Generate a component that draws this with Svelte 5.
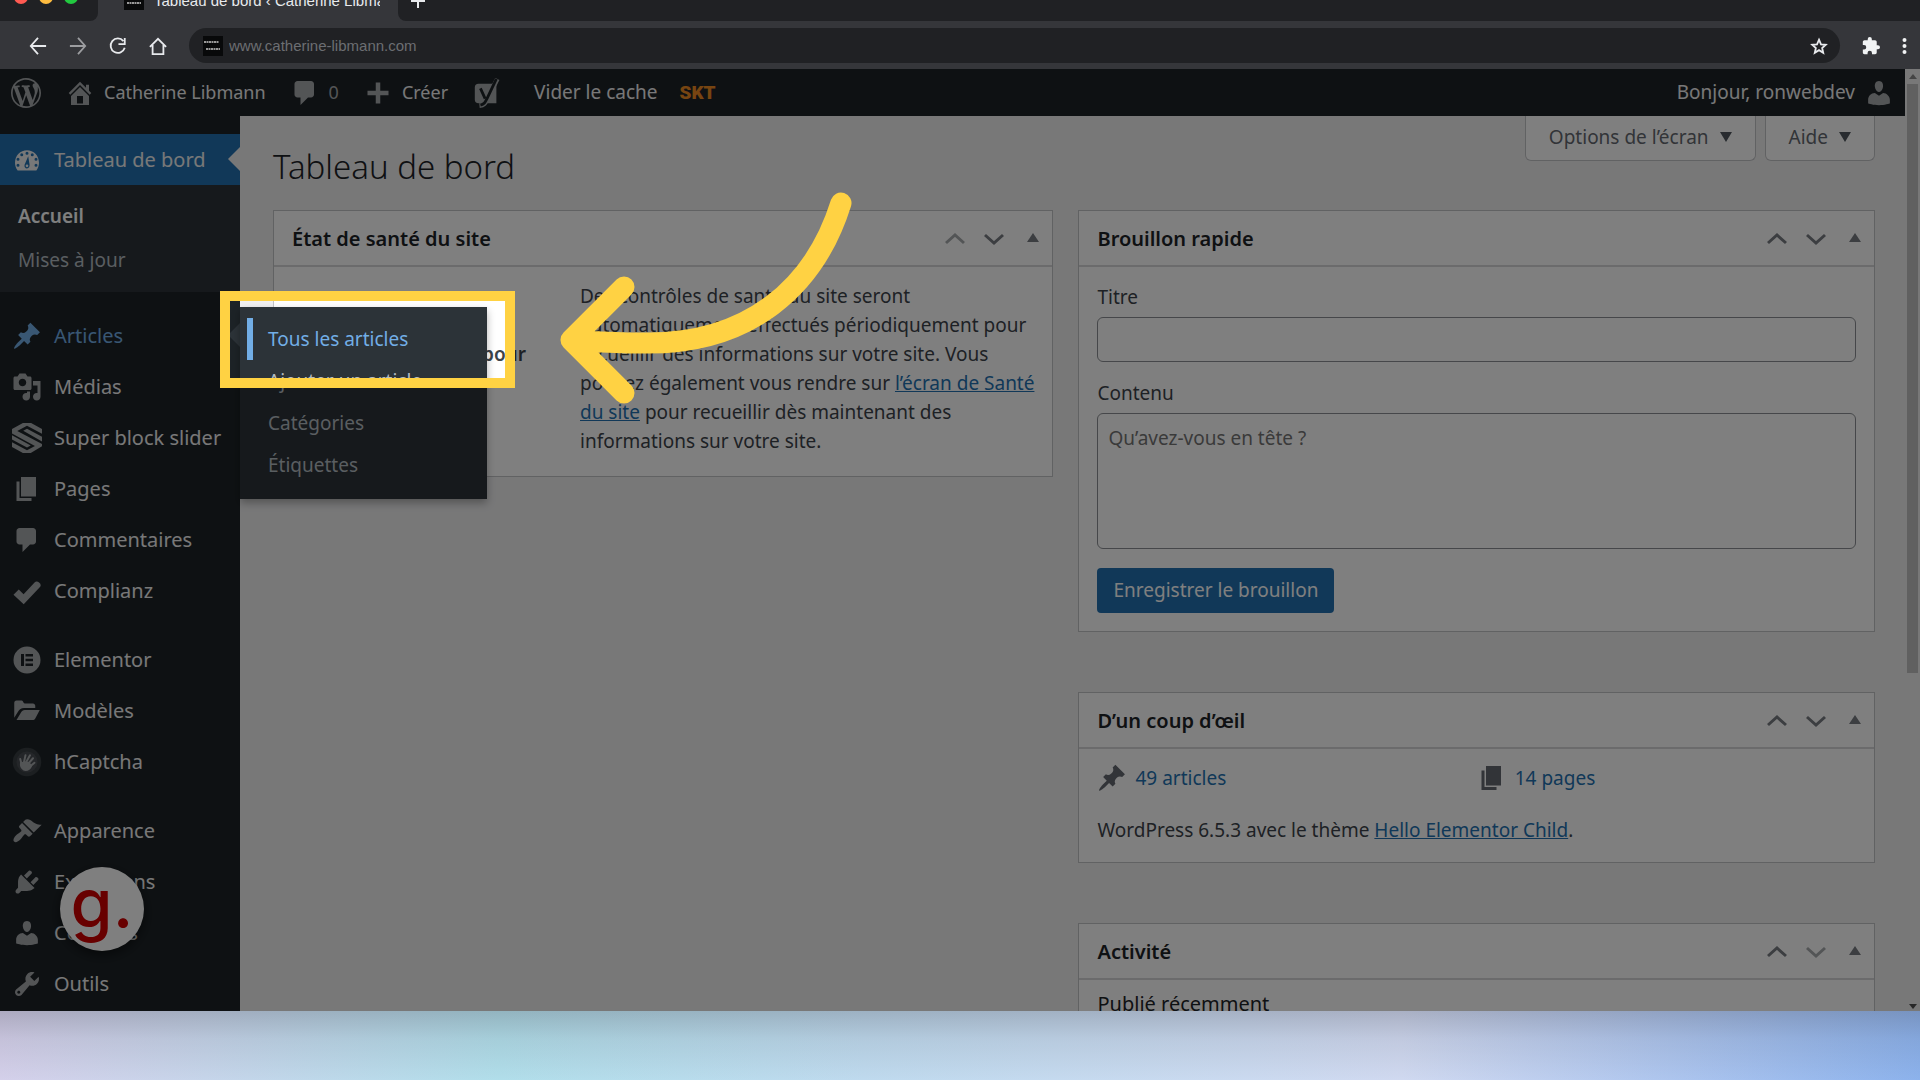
<script>
const icons = {
  wordpress: 'M20 10c0-5.51-4.49-10-10-10C4.48 0 0 4.49 0 10c0 5.52 4.48 10 10 10 5.51 0 10-4.48 10-10zM7.78 15.37L4.37 6.22c.55-.02 1.17-.08 1.17-.08.5-.06.44-1.13-.06-1.11 0 0-1.45.11-2.37.11-.18 0-.37 0-.58-.01C4.12 2.69 6.87 1.11 10 1.11c2.33 0 4.45.87 6.05 2.34-.68-.11-1.65.39-1.65 1.58 0 .74.45 1.36.9 2.1.35.61.55 1.36.55 2.46 0 1.49-1.4 5-1.4 5l-3.03-8.37c.54-.02.82-.17.82-.17.5-.05.44-1.25-.06-1.22 0 0-1.44.12-2.38.12-.87 0-2.33-.12-2.33-.12-.5-.03-.56 1.2-.06 1.22l.92.08 1.26 3.41zM17.41 10c.24-.64.74-1.87.43-4.25.7 1.29 1.05 2.71 1.05 4.25 0 3.29-1.73 6.24-4.4 7.78.97-2.59 1.94-5.2 2.92-7.78zM6.1 18.09C3.12 16.65 1.11 13.53 1.11 10c0-1.3.23-2.48.72-3.59C3.25 10.3 4.67 14.2 6.1 18.09zm4.03-6.63l2.58 6.98c-.86.29-1.76.45-2.71.45-.79 0-1.57-.11-2.29-.33.81-2.38 1.62-4.74 2.42-7.1z',
  home: 'M16 8.5l1.53 1.53-1.06 1.06L10 4.6l-6.47 6.49-1.06-1.06L10 2.5l4 4v-2h2v4zm-6-2.46l6 5.99V18H4v-5.97zM12 17v-5H8v5h4z',
  comments: 'M5 2h9c1.1 0 2 .9 2 2v7c0 1.1-.9 2-2 2h-2l-5 5v-5H5c-1.1 0-2-.9-2-2V4c0-1.1.9-2 2-2z',
  plus: 'M17 8.500v3h-5.500v5.500h-3v-5.500H3v-3h5.500V3h3v5.500z',
  dashboard: 'M3.760 17h12.480c1.340-1.590 1.760-3.600 1.760-5.140C18 7 14.420 3.500 10 3.500S2 7 2 11.860c0 1.540.420 3.550 1.760 5.140zM10 4.500a1 1 0 1 1 0 2 1 1 0 0 1 0-2zM6.500 5.500a1 1 0 1 1 0 2 1 1 0 0 1 0-2zM13.500 5.500a1 1 0 1 1 0 2 1 1 0 0 1 0-2zM4 8.500a1 1 0 1 1 0 2 1 1 0 0 1 0-2zM16 8.500a1 1 0 1 1 0 2 1 1 0 0 1 0-2zM4 12.500a1 1 0 1 1 0 2 1 1 0 0 1 0-2zM16 12.500a1 1 0 1 1 0 2 1 1 0 0 1 0-2zM10.800 7.500l.9 5.500c.2 1.500-.5 2.600-1.700 2.600s-2-1.200-1.600-2.500zM10 13a.9.9 0 1 0 0 1.800.9.9 0 0 0 0-1.800z',
  post: 'M10.440 3.020l1.820-1.820 6.360 6.350-1.830 1.820c-1.050-.68-2.480-.57-3.410.36l-.75.75c-.92.93-1.040 2.350-.35 3.410l-1.830 1.820-2.410-2.410-2.800 2.790c-.42.42-3.380 2.710-3.800 2.290s1.860-3.390 2.280-3.810l2.790-2.790L4.100 9.360l1.830-1.820c1.050.69 2.480.57 3.400-.36l.75-.75c.93-.92 1.050-2.350.36-3.410z',
  media: 'M13 11V4c0-.55-.45-1-1-1h-1.670L9 1H5L3.670 3H2c-.55 0-1 .45-1 1v7c0 .55.45 1 1 1h10c.55 0 1-.45 1-1zM7 4.500c1.380 0 2.500 1.120 2.500 2.500S8.380 9.500 7 9.500 4.500 8.380 4.500 7 5.620 4.500 7 4.500zM14 6h5v10.500c0 1.380-1.120 2.500-2.500 2.500S14 17.880 14 16.500s1.120-2.500 2.500-2.500c.17 0 .34.02.5.05V9h-3V6zm-4 8.050V13h2v3.500c0 1.380-1.120 2.500-2.500 2.500S7 17.880 7 16.500 8.120 14 9.500 14c.17 0 .34.02.5.05z',
  slider: 'M10 -1.500L20 4v3.200L10 1.800 3.500 5.300 20 14v1.500L10 21.500 0 16v-3.200l10 5.400 5.300-2.900L0 7V4zM7.500 5.200l2.500-1.400L20 9.200v3.100zM0 8.200l12.500 6.800-2.500 1.400L0 11z',
  page: 'M6 15V2h10v13H6zm-1 1h8v2H3V5h2v11z',
  check: 'M1 12.500l3.500-3.500 3.200 3.200 7.500-8c1.500-1.500 5 1 3.600 3L7.800 18.800z',
  elementor: 'M10 1a9 9 0 1 0 0 18 9 9 0 0 0 0-18zM6 6h2v8H6zM9 6h5v1.700H9zM9 9.200h5v1.700H9zM9 12.300h5V14H9z',
  folder: 'M1.500 4.500C1.500 3.700 2 3 3 3h3.500c1 0 1 2 2 2H14c.8 0 1.500.7 1.500 1.500V8H8C6 8 5 9 4.200 10.200L1.500 14.500zM3 16l3-5c.6-1 1.300-1.700 2.500-1.700H18.500L15.500 15c-.4.700-1 1-1.800 1z',
  appearance: 'M14.480 11.060L7.410 3.990l1.500-1.500c.5-.56 2.300-.47 3.510.32 1.210.8 1.430 1.280 2.910 2.100 1.180.64 2.450 1.260 4.450.85zm-.71.71L6.700 4.700 4.930 6.470c-.39.39-.39 1.020 0 1.410l1.060 1.060c.39.39.39 1.030 0 1.420-.6.6-1.430 1.110-2.210 1.690-.35.26-.7.53-1.010.84C1.430 14.230.4 16.080 1.400 17.070c.99 1 2.840-.03 4.180-1.360.31-.31.58-.66.85-1.020.57-.78 1.080-1.610 1.690-2.210.39-.39 1.020-.39 1.410 0l1.060 1.060c.39.39 1.020.39 1.410 0z',
  plugins: 'M13.110 4.360L9.870 7.600 8 5.730l3.240-3.240c.35-.34 1.050-.2 1.560.32.52.51.66 1.210.31 1.550zm-8 1.770l.91-1.120 9.010 9.010-1.190.84c-.71.71-2.630 1.160-3.820 1.160H6.140L4.900 17.260c-.59.59-1.540.59-2.120 0-.59-.58-.59-1.530 0-2.120l1.240-1.240v-3.880c0-1.130.4-3.190 1.090-3.890zm7.260 3.970l3.240-3.240c.34-.35 1.040-.21 1.550.31.52.51.66 1.210.31 1.550l-3.240 3.250z',
  users: 'M10 9.250c-2.270 0-2.730-3.440-2.730-3.440C7 4.020 7.820 2 9.970 2c2.160 0 2.980 2.020 2.710 3.810 0 0-.41 3.440-2.680 3.440zm0 2.570L12.720 10c2.390 0 4.520 2.330 4.520 4.530v2.490s-3.650 1.130-7.240 1.130c-3.650 0-7.240-1.130-7.240-1.130v-2.490c0-2.250 1.940-4.480 4.470-4.480z',
  tools: 'M16.680 9.770c-1.340 1.340-3.300 1.670-4.950.99l-5.410 6.520c-.99.99-2.590.99-3.580 0s-.99-2.590 0-3.570l6.520-5.420c-.68-1.650-.35-3.610.99-4.950 1.280-1.280 3.120-1.620 4.720-1.060l-2.890 2.890 2.820 2.820 2.860-2.870c.53 1.580.18 3.390-1.080 4.650zM3.810 16.210c.4.39 1.040.39 1.430 0 .4-.4.4-1.040 0-1.430-.39-.4-1.030-.4-1.430 0-.39.39-.39 1.030 0 1.430z'
}

const menuGroups = [
  [
    { label: 'Articles', icon: 'post', open: true },
    { label: 'Médias', icon: 'media' },
    { label: 'Super block slider', icon: 'slider' },
    { label: 'Pages', icon: 'page' },
    { label: 'Commentaires', icon: 'comments' },
    { label: 'Complianz', icon: 'check' }
  ],
  [
    { label: 'Elementor', icon: 'elementor' },
    { label: 'Modèles', icon: 'folder' },
    { label: 'hCaptcha', icon: 'hand' }
  ],
  [
    { label: 'Apparence', icon: 'appearance' },
    { label: 'Extensions', icon: 'plugins' },
    { label: 'Comptes', icon: 'users' },
    { label: 'Outils', icon: 'tools' }
  ]
]

const flyout = ['Tous les articles', 'Ajouter un article', 'Catégories', 'Étiquettes']

let title = $state('')
let content = $state('')
</script>

{#snippet icon(name)}
  <svg class="icon" viewBox="0 0 20 20" aria-hidden="true">
    {#if name === 'hand'}
      <circle cx="10" cy="10" r="9.500" fill-opacity=".2" />
      <circle cx="10" cy="10" r="7" fill-opacity=".15" />
      <path d="M5.500 8l1 4M9 5.500L8 10M12 5.500L9.500 10M14 7.500L11 11M15 10.500L12 13" fill="none" stroke="currentColor" stroke-width="1.300" stroke-linecap="round" />
      <path d="M5.500 10c1-.5 1.500.5 2.500-.5l3.500.5 2 2.500c-1 2.500-2.500 3.500-4.500 3.500S4.500 13.500 5.500 10z" />
    {:else}
      <path d={icons[name]} fill-rule="evenodd" />
    {/if}
  </svg>
{/snippet}

{#snippet favicon()}
  <svg class="favicon" viewBox="0 0 20 20" aria-hidden="true">
    <rect width="20" height="20" fill="#08090a" />
    <path d="M1 6h15M3 13h14" stroke="#999" stroke-width="2" stroke-dasharray="2 .5" />
  </svg>
{/snippet}

{#snippet boxHead(text, first, last)}
  <header class="box-head">
    <h2>{text}</h2>
    <button class:off={first} aria-label="Monter"><svg viewBox="0 0 20 20"><path d="M1 14l9-8 9 8" /></svg></button>
    <button class:off={last} aria-label="Descendre"><svg viewBox="0 0 20 20"><path d="M1 6l9 8 9-8" /></svg></button>
    <button class="toggle" aria-label="Replier"><svg viewBox="0 0 20 20"><path d="M4 13l6-9 6 9z" /></svg></button>
  </header>
{/snippet}

<div class="screen">
  <div class="browser">
    <div class="tabs">
      <div class="lights"><i class="red"></i><i class="amber"></i><i class="green"></i></div>
      <div class="tab">{@render favicon()}<span>Tableau de bord ‹ Catherine Libmann</span></div>
      <div class="new-tab"><button aria-label="Nouvel onglet">
        <svg viewBox="0 0 16 16"><path d="M8 1v14M1 8h14" /></svg>
      </button></div>
    </div>
    <div class="toolbar">
      <button aria-label="Précédent"><svg viewBox="0 0 20 20"><path d="M19 10H3M10 1l-8 9 8 9" /></svg></button>
      <button class="muted" aria-label="Suivant"><svg viewBox="0 0 20 20"><path d="M1 10h16M10 1l8 9-8 9" /></svg></button>
      <button aria-label="Actualiser"><svg viewBox="0 0 20 20"><path d="M16 4.500A8 8 0 1 0 17.500 12M17.500 1v7h-7" /></svg></button>
      <button aria-label="Accueil"><svg viewBox="0 0 20 20"><path d="M1 11l9-9 9 9M4 9v10h12V9" /></svg></button>
      <div class="address">
        {@render favicon()}
        <input aria-label="Adresse" value="www.catherine-libmann.com" />
        <button aria-label="Favoris"><svg viewBox="0 0 20 20"><path d="M10 3l2.200 5.200 5.300.4-4 3.600 1.200 5.300L10 14.600l-4.700 2.900 1.200-5.300-4-3.600 5.300-.4z" /></svg></button>
      </div>
      <button class="solid" aria-label="Extensions"><svg viewBox="1 1 22 22"><path d="M20.500 11H19V7c0-1.100-.9-2-2-2h-4V3.500a2.500 2.500 0 0 0-5 0V5H4c-1.100 0-2 .9-2 2v3.800h1.500a2.700 2.700 0 0 1 0 5.400H2V20c0 1.100.9 2 2 2h3.800v-1.500a2.700 2.700 0 0 1 5.400 0V22H17c1.100 0 2-.9 2-2v-4h1.500a2.500 2.500 0 0 0 0-5z" /></svg></button>
      <button class="solid dots" aria-label="Menu"><svg viewBox="0 0 5 18"><circle cx="2.500" cy="3" r="2" /><circle cx="2.500" cy="9" r="2" /><circle cx="2.500" cy="15" r="2" /></svg></button>
    </div>
  </div>

  <div class="page">
    <nav class="adminbar">
      <a href="#about" aria-label="À propos de WordPress">{@render icon('wordpress')}</a>
      <a href="#site">{@render icon('home')}Catherine Libmann</a>
      <a href="#comments" class="count">{@render icon('comments')}<span>0</span></a>
      <a href="#new">{@render icon('plus')}Créer</a>
      <a href="#yoast" class="yoast" aria-label="Yoast SEO">
        <svg class="icon" viewBox="0 0 30 32">
          <path d="M6 6h19v21H6a4 4 0 0 1-4-4V10a4 4 0 0 1 4-4z" />
          <path d="M8 11l5 11M26 1L15 23c-2 4-3 6-8 6.500" fill="none" stroke="#a7aaad" stroke-width="5" />
          <path d="M8 11l5 11M25 1L15 22c-2 4-3 6-7 7" fill="none" stroke="#1d2327" stroke-width="3" />
        </svg>
      </a>
      <a href="#cache" class="cache">Vider le cache</a>
      <a href="#skt" class="skt">SKT</a>
      <a href="#profile" class="account">Bonjour, ronwebdev{@render icon('users')}</a>
    </nav>

    <div class="body">
      <nav class="sidebar">
        <a href="#dashboard" class="item current">{@render icon('dashboard')}Tableau de bord</a>
        <div class="submenu">
          <a href="#home" class="selected">Accueil</a>
          <a href="#updates">Mises à jour</a>
        </div>
        {#each menuGroups as group, index (index)}
          <div class="group">
            {#each group as item (item.label)}
              <div class="entry">
                <a href="#{item.icon}" class="item" class:open={item.open}>{@render icon(item.icon)}{item.label}</a>
                {#if item.open}
                  <div class="flyout">
                    {#each flyout as label, index (label)}
                      <a href="#articles-{index}" class:hover={index === 0}>{label}</a>
                    {/each}
                  </div>
                {/if}
              </div>
            {/each}
          </div>
        {/each}
      </nav>

      <main>
        <div class="heading">
          <h1>Tableau de bord</h1>
          <div class="screen-links">
            <button>Options de l’écran <i></i></button>
            <button>Aide <i></i></button>
          </div>
        </div>
        <div class="columns">
          <section class="box">
            {@render boxHead('État de santé du site', true, false)}
            <div class="health">
              <strong>pour</strong>
              <p>
                Des contrôles de santé du site seront automatiquement effectués périodiquement pour recueillir
                des informations sur votre site. Vous pouvez également vous rendre sur
                <a href="#health">l’écran de Santé du site</a> pour recueillir dès maintenant des informations
                sur votre site.
              </p>
            </div>
          </section>

          <div class="column">
            <section class="box">
              {@render boxHead('Brouillon rapide', false, false)}
              <form class="draft">
                <label for="draft-title">Titre</label>
                <input id="draft-title" bind:value={title} />
                <label for="draft-content">Contenu</label>
                <textarea id="draft-content" placeholder="Qu’avez-vous en tête ?" bind:value={content}></textarea>
                <button type="button">Enregistrer le brouillon</button>
              </form>
            </section>

            <section class="box">
              {@render boxHead('D’un coup d’œil', false, false)}
              <div class="glance">
                <ul>
                  <li>{@render icon('post')}<a href="#posts">49 articles</a></li>
                  <li>{@render icon('page')}<a href="#pages">14 pages</a></li>
                </ul>
                <p>WordPress 6.5.3 avec le thème <a href="#theme">Hello Elementor Child</a>.</p>
              </div>
            </section>

            <section class="box">
              {@render boxHead('Activité', false, true)}
              <h3>Publié récemment</h3>
            </section>
          </div>
        </div>
      </main>

      <button class="badge">g.</button>
    </div>

    <div class="scrollbar"><i class="up"></i><div class="thumb"></div><i class="down"></i></div>
    <div class="spotlight"></div>
    <svg class="arrow" viewBox="0 0 300 220" aria-hidden="true">
      <path d="M281 22C255 105 190 165 80 162C50 162 30 160 11 159M64 106L11 159L64 212" />
    </svg>
  </div>
  <footer></footer>
</div>

<style>
:global(body) {
  margin: 0;
  overflow: hidden;
}

.screen {
  display: flex;
  flex-direction: column;
  height: 100vh;
  font-family: "Noto Sans", "Open Sans", sans-serif;
  font-size: 19px;
  line-height: 29px;
  color: #3c434a;
}

button,
input,
textarea {
  font: inherit;
  color: inherit;
  box-sizing: border-box;
}

button {
  padding: 0;
  border: 0;
  background: none;
}

h1,
h2,
h3,
p,
ul {
  margin: 0;
  padding: 0;
}

a {
  color: #2271b1;
}

/* browser chrome */
.browser {
  flex: none;
  font-family: "Liberation Sans", sans-serif;
  background: #35363a;
}

.tabs {
  display: flex;
  height: 21px;
}

.lights,
.new-tab {
  background: #202124;
}

.lights {
  display: flex;
  gap: 11px;
  width: 84px;
  padding-left: 14px;
  border-bottom-right-radius: 8px;
}

.lights i {
  width: 14px;
  height: 14px;
  margin-top: -10px;
  border-radius: 50%;
}

.red {
  background: #ff5a52;
}

.amber {
  background: #fdbc40;
}

.green {
  background: #22c940;
}

.tab {
  display: flex;
  align-items: flex-start;
  gap: 10px;
  width: 256px;
  padding: 0 18px 0 26px;
  overflow: hidden;
  color: #e8eaed;
  font-size: 15px;
  line-height: 22px;
  white-space: nowrap;
}

.tab .favicon,
.tab span {
  margin-top: -10px;
}

.tab span {
  overflow: hidden;
}

.favicon {
  flex: none;
  width: 20px;
  height: 20px;
}

.new-tab {
  flex: 1;
  padding-left: 12px;
  border-bottom-left-radius: 8px;
}

.new-tab button {
  display: block;
  width: 16px;
  height: 16px;
  margin-top: -7px;
}

.browser svg {
  display: block;
}

.browser button svg {
  width: 100%;
  height: 100%;
  fill: none;
  stroke: #e8eaed;
  stroke-width: 2;
}

.toolbar {
  display: flex;
  align-items: center;
  gap: 22px;
  height: 47px;
  padding: 1px 13px 0 29px;
}

.toolbar button {
  flex: none;
  width: 18px;
  height: 18px;
}

.toolbar .muted svg {
  stroke: #9c9da0;
}

.toolbar .solid svg {
  fill: #f1f3f4;
  stroke: none;
}

.toolbar .dots {
  width: 5px;
}

.address {
  display: flex;
  align-items: center;
  flex: 1;
  gap: 6px;
  height: 35px;
  padding: 0 12px 0 14px;
  border-radius: 18px;
  background: #202124;
}

.address input {
  flex: 1;
  min-width: 0;
  padding: 0;
  border: 0;
  background: none;
  color: #6c6e72;
  font-size: 15px;
}

/* admin page */
.page {
  position: relative;
  display: grid;
  grid-template-columns: minmax(0, 1fr) 15px;
  grid-template-rows: 47px minmax(0, 1fr);
  flex: 1;
  min-height: 0;
  overflow: hidden;
  background: #f0f0f1;
}

.icon {
  flex: none;
  width: 30px;
  height: 30px;
  fill: currentColor;
}

.adminbar {
  display: flex;
  align-items: center;
  padding: 0 11px;
  background: #1d2327;
}

.adminbar a {
  display: flex;
  align-items: center;
  gap: 9px;
  margin-right: 24px;
  color: #f0f0f1;
  font-size: 18px;
  text-decoration: none;
}

.adminbar .icon {
  color: #a7aaad;
}

.adminbar .count span {
  color: #a7aaad;
}

.adminbar .cache {
  margin: 0 22px 0 8px;
  font-size: 19px;
}

.adminbar .skt {
  color: #ee8b22;
  font-family: Roboto, sans-serif;
  font-size: 19px;
  font-weight: 900;
}

.adminbar .account {
  margin: 0 0 0 auto;
  font-size: 19px;
}

.body {
  position: relative;
  grid-row: 2;
  display: flex;
  min-height: 0;
}

.sidebar {
  position: relative;
  z-index: 1;
  flex: none;
  width: 240px;
  padding-top: 18px;
  background: #1d2327;
}

.item {
  position: relative;
  display: flex;
  align-items: center;
  gap: 12px;
  height: 51px;
  padding-left: 12px;
  color: #f0f0f1;
  font-size: 20px;
  white-space: nowrap;
  text-decoration: none;
}

.item .icon {
  color: #a7aaad;
}

.item.current {
  background: #2271b1;
}

.item.current .icon {
  color: #f0f0f1;
}

.item.open,
.item.open .icon {
  color: #72aee6;
}

.item.current::after,
.item.open::after {
  content: "";
  position: absolute;
  top: 13px;
  right: 0;
  border: 12px solid transparent;
  border-left: 0;
  border-right-color: #f0f0f1;
}

.item.open::after {
  border-right-color: #2c3338;
}

.submenu {
  padding: 9px 0 10px;
  background: #2c3338;
}

.submenu a {
  display: block;
  padding-left: 18px;
  color: #b5bcc2;
  line-height: 44px;
  text-decoration: none;
}

.submenu .selected {
  color: #fff;
  font-weight: 600;
}

.group {
  padding-top: 18px;
}

.entry {
  position: relative;
}

.flyout {
  position: absolute;
  top: -3px;
  left: 100%;
  width: 247px;
  padding: 11px 0 13px;
  box-sizing: border-box;
  background: #2c3338;
  box-shadow: 0 4px 8px rgba(0, 0, 0, 0.3);
}

.flyout a {
  display: block;
  margin-left: 7px;
  padding-left: 15px;
  border-left: 6px solid transparent;
  color: #b5bcc2;
  line-height: 42px;
  text-decoration: none;
}

.flyout .hover {
  border-color: #72aee6;
  color: #72aee6;
}

main {
  flex: 1;
  min-width: 0;
  padding: 0 30px 0 33px;
}

.heading {
  display: flex;
  justify-content: space-between;
  align-items: flex-start;
  height: 94px;
}

h1 {
  padding-top: 32px;
  color: #1d2327;
  font-size: 33px;
  font-weight: 300;
  line-height: 38px;
}

.screen-links {
  display: flex;
  gap: 9px;
}

.screen-links button {
  display: flex;
  align-items: center;
  gap: 11px;
  height: 45px;
  padding: 0 23px 2px;
  border: 1px solid #c3c4c7;
  border-top: 0;
  border-radius: 0 0 6px 6px;
  background: #fff;
  color: #646970;
}

.screen-links i {
  border: 6px solid transparent;
  border-top: 10px solid #50575e;
  border-bottom: 0;
}

.columns {
  display: grid;
  grid-template-columns: 780fr 796fr;
  align-items: start;
  gap: 25px;
}

.column {
  display: flex;
  flex-direction: column;
  gap: 60px;
}

.box {
  border: 1px solid #c3c4c7;
  background: #fff;
}

.box-head {
  display: flex;
  align-items: center;
  height: 54px;
  padding-left: 18px;
  border-bottom: 2px solid #d6d7d9;
}

h2 {
  flex: 1;
  color: #1d2327;
  font-size: 20px;
  font-weight: 600;
}

.box-head button {
  width: 39px;
  height: 39px;
}

.box-head svg {
  width: 20px;
  height: 20px;
  vertical-align: middle;
  fill: none;
  stroke: #787c82;
  stroke-width: 3;
}

.box-head .off svg {
  stroke: #a7aaad;
}

.box-head .toggle svg {
  fill: #787c82;
  stroke: none;
}

.health {
  display: grid;
  grid-template-columns: 234px 1fr;
  gap: 54px;
  padding: 15px 17px 20px 18px;
}

.health strong {
  align-self: start;
  padding-top: 58px;
  text-align: right;
  font-weight: 600;
}

.draft {
  display: flex;
  flex-direction: column;
  align-items: stretch;
  padding: 16px 18px 18px;
}

.draft input,
.draft textarea {
  height: 45px;
  margin: 5px 0 17px;
  padding: 10px;
  border: 1px solid #8c8f94;
  border-radius: 6px;
  background: #fff;
  resize: none;
}

.draft textarea {
  height: 136px;
  margin-bottom: 19px;
}

.draft button {
  align-self: flex-start;
  height: 45px;
  padding: 0 16px;
  border-radius: 4px;
  background: #2271b1;
  color: #fff;
}

.glance {
  padding: 14px 18px 17px;
}

.glance ul {
  display: grid;
  grid-template-columns: 1fr 1fr;
  margin-bottom: 23px;
  list-style: none;
}

.glance li {
  display: flex;
  align-items: center;
  gap: 8px;
}

.glance li a {
  text-decoration: none;
}

.glance .icon {
  color: #646970;
}

h3 {
  padding: 9px 18px;
  color: #1d2327;
  font-size: 20px;
  font-weight: 400;
}

.badge {
  position: absolute;
  z-index: 2;
  left: 60px;
  bottom: 60px;
  width: 84px;
  height: 84px;
  padding-bottom: 12px;
  border-radius: 50%;
  background: #fff;
  box-shadow: 0 4px 12px rgba(0, 0, 0, 0.5);
  color: #d00000;
  font-family: Inter, sans-serif;
  font-size: 68px;
  font-weight: 500;
  line-height: 72px;
}

.scrollbar {
  grid-column: 2;
  grid-row: 1 / 3;
  display: flex;
  flex-direction: column;
  align-items: center;
  gap: 5px;
  padding: 5px 0 2px;
  background: #f1f1f1;
}

.scrollbar i {
  border: 4px solid transparent;
}

.scrollbar .up {
  border-top: 0;
  border-bottom: 5px solid #888;
}

.scrollbar .down {
  margin-top: auto;
  border-bottom: 0;
  border-top: 5px solid #505050;
}

.thumb {
  width: 11px;
  height: 63%;
  background: #c1c1c1;
}

.spotlight {
  position: absolute;
  z-index: 3;
  top: 222px;
  left: 220px;
  width: 275px;
  height: 77px;
  border: 10px solid #ffd243;
  box-shadow: 0 0 0 3000px rgba(0, 0, 0, 0.5);
}

.arrow {
  position: absolute;
  z-index: 4;
  top: 112px;
  left: 560px;
  width: 300px;
  height: 220px;
  overflow: visible;
  fill: none;
  stroke: #ffd243;
  stroke-width: 21;
  stroke-linecap: round;
  stroke-linejoin: round;
}

footer {
  flex: none;
  height: 69px;
  background:
    linear-gradient(rgba(60, 60, 70, 0.26), rgba(60, 60, 70, 0.1) 40%, transparent),
    linear-gradient(90deg, #d4d0ea, #c3d6ea 13%, #b1deea 26%, #bfdaee 45%, #cbdaf0 65%, #d0d9f0 73%, #adc5ee 87%, #8cb2ec);
}
</style>
